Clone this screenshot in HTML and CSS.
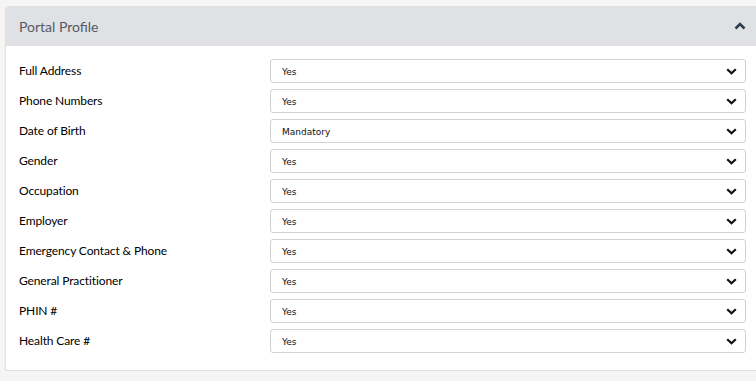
FILE: index.html
```html
<!DOCTYPE html>
<html lang="en">
<head>
    <meta charset="UTF-8">
    <title>Portal Profile</title>
    <link rel="stylesheet" href="styles.css">
</head>
<body>
    <div class="panel">
        <div class="panel-header">
            <span class="panel-title">Portal Profile</span>
            <svg class="toggle" width="12" height="8" viewBox="0 0 12 8"><path d="M1.5 6.5 L6 2 L10.5 6.5" fill="none" stroke="#2f3b4a" stroke-width="2.6"/></svg>
        </div>
        <div class="panel-body">
            <div class="row"><label>Full Address</label><div class="select"><span>Yes</span><svg width="11" height="7" viewBox="0 0 11 7"><path d="M1.2 1.2 L5.5 5.3 L9.8 1.2" fill="none" stroke="#111" stroke-width="2.2"/></svg></div></div>
            <div class="row"><label>Phone Numbers</label><div class="select"><span>Yes</span><svg width="11" height="7" viewBox="0 0 11 7"><path d="M1.2 1.2 L5.5 5.3 L9.8 1.2" fill="none" stroke="#111" stroke-width="2.2"/></svg></div></div>
            <div class="row"><label>Date of Birth</label><div class="select"><span>Mandatory</span><svg width="11" height="7" viewBox="0 0 11 7"><path d="M1.2 1.2 L5.5 5.3 L9.8 1.2" fill="none" stroke="#111" stroke-width="2.2"/></svg></div></div>
            <div class="row"><label>Gender</label><div class="select"><span>Yes</span><svg width="11" height="7" viewBox="0 0 11 7"><path d="M1.2 1.2 L5.5 5.3 L9.8 1.2" fill="none" stroke="#111" stroke-width="2.2"/></svg></div></div>
            <div class="row"><label>Occupation</label><div class="select"><span>Yes</span><svg width="11" height="7" viewBox="0 0 11 7"><path d="M1.2 1.2 L5.5 5.3 L9.8 1.2" fill="none" stroke="#111" stroke-width="2.2"/></svg></div></div>
            <div class="row"><label>Employer</label><div class="select"><span>Yes</span><svg width="11" height="7" viewBox="0 0 11 7"><path d="M1.2 1.2 L5.5 5.3 L9.8 1.2" fill="none" stroke="#111" stroke-width="2.2"/></svg></div></div>
            <div class="row"><label>Emergency Contact &amp; Phone</label><div class="select"><span>Yes</span><svg width="11" height="7" viewBox="0 0 11 7"><path d="M1.2 1.2 L5.5 5.3 L9.8 1.2" fill="none" stroke="#111" stroke-width="2.2"/></svg></div></div>
            <div class="row"><label>General Practitioner</label><div class="select"><span>Yes</span><svg width="11" height="7" viewBox="0 0 11 7"><path d="M1.2 1.2 L5.5 5.3 L9.8 1.2" fill="none" stroke="#111" stroke-width="2.2"/></svg></div></div>
            <div class="row"><label>PHIN #</label><div class="select"><span>Yes</span><svg width="11" height="7" viewBox="0 0 11 7"><path d="M1.2 1.2 L5.5 5.3 L9.8 1.2" fill="none" stroke="#111" stroke-width="2.2"/></svg></div></div>
            <div class="row"><label>Health Care #</label><div class="select"><span>Yes</span><svg width="11" height="7" viewBox="0 0 11 7"><path d="M1.2 1.2 L5.5 5.3 L9.8 1.2" fill="none" stroke="#111" stroke-width="2.2"/></svg></div></div>
        </div>
    </div>
</body>
</html>
```

FILE: styles.css
```css
body {
    margin: 0;
    padding: 6px 0 0 5px;
    background-color: #f6f5f3;
    font-family: Lato, "Noto Sans", sans-serif;
}
.panel {
    width: 760px;
    background-color: #fff;
    border: 1px solid #e2e2e2;
    border-radius: 3px;
    box-shadow: 0 1px 2px rgba(0, 0, 0, 0.08);
    overflow: hidden;
}
.panel-header {
    height: 39px;
    background-color: #dfe1e5;
    display: flex;
    align-items: center;
    justify-content: space-between;
    padding: 0 15px 0 13px;
    width: 727px;
}
.panel-title {
    font-size: 14px;
    color: #555a63;
}
.toggle {
    margin-top: -1px;
}
.panel-body {
    padding: 13px 0 17px 13px;
    display: flex;
    flex-direction: column;
    gap: 6px;
}
.row {
    display: flex;
    align-items: center;
}
.row label {
    width: 251px;
    font-size: 12px;
    letter-spacing: -0.12px;
    color: #000;
    margin-top: -1px;
}
.select {
    width: 476px;
    height: 24px;
    box-sizing: border-box;
    border: 1px solid #d2d2d2;
    border-radius: 3px;
    display: flex;
    align-items: center;
    justify-content: space-between;
    padding: 1px 8px 0 11px;
    font-family: "DejaVu Sans", Verdana, sans-serif;
    font-size: 9px;
    color: #111;
}
```
